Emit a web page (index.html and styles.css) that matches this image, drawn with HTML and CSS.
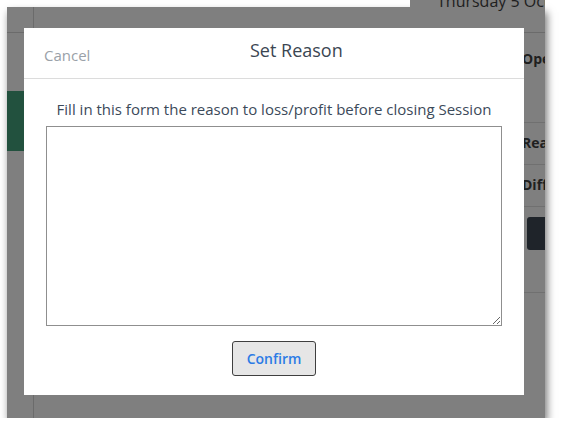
FILE: index.html
```html
<!DOCTYPE html>
<html>
<head>
<meta charset="utf-8">
<link rel="stylesheet" href="styles.css">
</head>
<body>
<div class="window">
  <div class="topstrip"><span class="date">Thursday 5 Oct</span></div>
  <div class="app">
    <div class="sidebar">
      <div class="side-top"></div>
      <div class="side-green"></div>
    </div>
    <div class="main">
      <div class="main-top"></div>
      <div class="row r-op"><b>Opening</b></div>
      <div class="row r-rea"><b>Real</b></div>
      <div class="row r-dif"><b>Difference</b></div>
      <div class="row r-btn"><span class="darkbtn">Close</span></div>
      <div class="row r-end"></div>
    </div>
  </div>
  <div class="modal">
    <div class="modal-head">
      <span class="cancel">Cancel</span>
      <span class="title">Set Reason</span>
    </div>
    <div class="modal-body">
      <p class="hint">Fill in this form the reason to loss/profit before closing Session</p>
      <textarea class="reason"></textarea>
      <button class="confirm">Confirm</button>
    </div>
  </div>
</div>
</body>
</html>
```

FILE: styles.css
```css
html, body {
  margin: 0;
  padding: 0;
  background: #ffffff;
  font-family: "Open Sans", "Noto Sans", sans-serif;
}
.window {
  position: relative;
  margin: 7px 0 0 7px;
  width: 538px;
  height: 411px;
  background: #7f7f7f;
  box-shadow: 2px 5px 8px rgba(0, 0, 0, 0.55);
}
.topstrip {
  position: absolute;
  top: -7px;
  right: 0;
  width: 135px;
  height: 20px;
  background: #7f7f7f;
  overflow: hidden;
}
.date {
  position: absolute;
  left: 27px;
  top: -10px;
  font-size: 16px;
  color: #1e1e1e;
  white-space: nowrap;
}
.app {
  display: flex;
  height: 100%;
}
.sidebar {
  width: 26px;
  border-right: 1px solid #6b6b6b;
  display: flex;
  flex-direction: column;
}
.side-top {
  height: 25px;
  border-bottom: 1px solid #6b6b6b;
  margin-right: -1px;
}
.side-green {
  margin-top: 58px;
  height: 60px;
  background: #22513e;
}
.main {
  flex: 1;
  display: flex;
  flex-direction: column;
}
.main-top {
  height: 25px;
  border-bottom: 1px solid #6b6b6b;
}
.row {
  display: flex;
  justify-content: flex-end;
  font-size: 14px;
  color: #202020;
  white-space: nowrap;
  overflow: hidden;
}
.row b {
  width: 23px;
  overflow: hidden;
  font-weight: 700;
}
.r-op {
  height: 90px;
  padding-top: 16px;
  box-sizing: border-box;
  border-bottom: 1px solid #707070;
}
.r-rea, .r-dif {
  height: 42px;
  padding-top: 10px;
  box-sizing: border-box;
  border-bottom: 1px solid #707070;
}
.r-btn {
  height: 86px;
  padding-top: 10px;
  box-sizing: border-box;
  border-bottom: 1px solid #707070;
}
.darkbtn {
  width: 18px;
  height: 33px;
  background: #1f242a;
  border-radius: 3px 0 0 3px;
  color: #1f242a;
  overflow: hidden;
}
.modal {
  position: absolute;
  left: 17px;
  top: 21px;
  width: 500px;
  height: 367px;
  background: #ffffff;
}
.modal-head {
  height: 51px;
  border-bottom: 1px solid #dcdcdc;
  display: flex;
  align-items: center;
  padding-left: 20px;
  box-sizing: border-box;
}
.cancel {
  font-size: 15px;
  color: #9aa1a8;
  margin-top: 3px;
  width: 206px;
}
.title {
  font-size: 18px;
  color: #3b4652;
  margin-top: -6px;
}
.modal-body {
  display: flex;
  flex-direction: column;
  align-items: center;
}
.hint {
  margin: 20px 0 0;
  font-size: 15px;
  color: #3c4a5a;
  line-height: 20px;
}
.reason {
  margin-top: 7px;
  width: 456px;
  height: 200px;
  box-sizing: border-box;
  border: 1px solid #8f8f8f;
  border-radius: 0;
  padding: 0;
  background: #fff;
  resize: both;
}
.confirm {
  margin-top: 15px;
  width: 84px;
  height: 35px;
  background: #e6e6e6;
  border: 1px solid #3f3f3f;
  border-radius: 3px;
  font-family: "Open Sans", "Noto Sans", sans-serif;
  font-size: 14px;
  font-weight: 600;
  color: #2c7be5;
  padding: 0;
}
```
